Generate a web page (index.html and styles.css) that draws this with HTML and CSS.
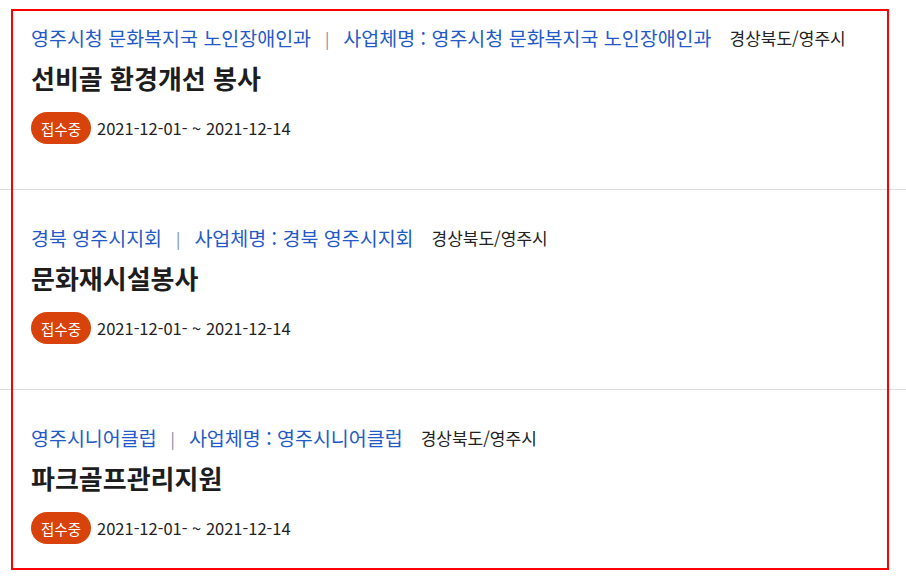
FILE: index.html
```html
<!doctype html>
<html lang="ko">
<head>
    <meta charset="UTF-8">
    <meta name="viewport" content="width=device-width, initial-scale=1.0">
    <link rel="stylesheet" href="styles.css">
    <title>봉사활동 목록</title>
</head>
<body>
<div class="board">
    <ul class="vol-list">
        <li class="vol-item">
            <div class="meta">
                <span class="org">영주시청 문화복지국 노인장애인과</span>
                <span class="bar">|</span>
                <span class="org">사업체명 : 영주시청 문화복지국 노인장애인과</span>
                <span class="region">경상북도/영주시</span>
            </div>
            <h3 class="title">선비골 환경개선 봉사</h3>
            <div class="period">
                <span class="badge">접수중</span>
                <span class="date">2021-12-01- ~ 2021-12-14</span>
            </div>
        </li>
        <li class="vol-item">
            <div class="meta">
                <span class="org">경북 영주시지회</span>
                <span class="bar">|</span>
                <span class="org">사업체명 : 경북 영주시지회</span>
                <span class="region">경상북도/영주시</span>
            </div>
            <h3 class="title">문화재시설봉사</h3>
            <div class="period">
                <span class="badge">접수중</span>
                <span class="date">2021-12-01- ~ 2021-12-14</span>
            </div>
        </li>
        <li class="vol-item">
            <div class="meta">
                <span class="org">영주시니어클럽</span>
                <span class="bar">|</span>
                <span class="org">사업체명 : 영주시니어클럽</span>
                <span class="region">경상북도/영주시</span>
            </div>
            <h3 class="title">파크골프관리지원</h3>
            <div class="period">
                <span class="badge">접수중</span>
                <span class="date">2021-12-01- ~ 2021-12-14</span>
            </div>
        </li>
    </ul>
    <div class="highlight"></div>
</div>
</body>
</html>
```

FILE: styles.css
```css
html, body {
    margin: 0;
    padding: 0;
    background: #fff;
    font-family: "Noto Sans CJK KR", "Noto Sans", sans-serif;
    color: #222;
}

.board {
    position: relative;
    height: 579px;
    overflow: hidden;
}

.vol-list {
    list-style: none;
    margin: 0;
    padding: 0;
}

.vol-item {
    padding: 37px 31px 45px;
    border-bottom: 1px solid #ddd;
}
.vol-item:first-child {
    padding-top: 27px;
}

.meta {
    display: flex;
    align-items: center;
    height: 22px;
    line-height: 22px;
    white-space: nowrap;
}
.meta .org {
    font-size: 19.5px;
    color: #2459c8;
}
.meta .bar {
    font-size: 16px;
    color: #7f88a8;
    margin: 0 14px;
}
.meta .region {
    font-size: 17px;
    color: #222;
    margin-left: 18px;
}

.title {
    margin: 14px 0 0;
    font-size: 26px;
    line-height: 30px;
    font-weight: 700;
    color: #1d1d1d;
}

.period {
    display: flex;
    align-items: center;
    gap: 6px;
    margin-top: 19px;
    height: 32px;
}
.badge {
    display: inline-flex;
    align-items: center;
    justify-content: center;
    width: 60px;
    height: 32px;
    border-radius: 16px;
    background: #d8420b;
    color: #fff;
    font-size: 14.5px;
}
.date {
    font-size: 16.5px;
    color: #222;
}

.highlight {
    position: absolute;
    left: 11px;
    top: 9px;
    width: 874px;
    height: 557px;
    border: 2px solid #f00;
    pointer-events: none;
}
```
